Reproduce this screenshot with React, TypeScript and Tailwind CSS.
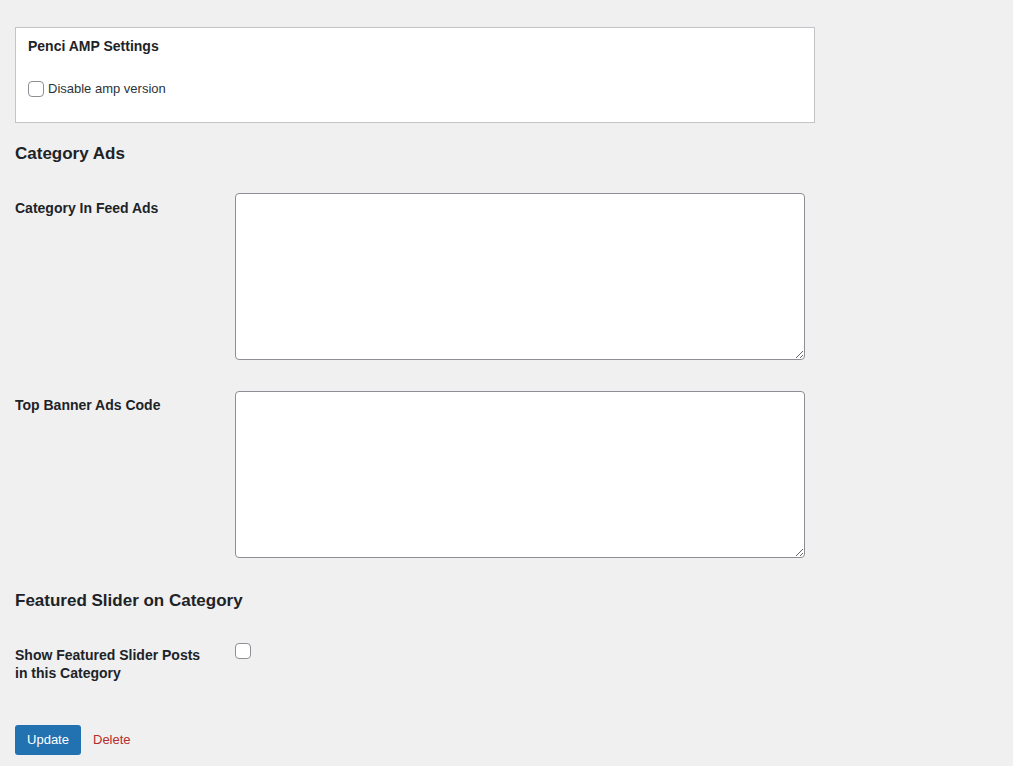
export default function App() {
  return (
    <div
      className="min-h-[766px] bg-[#f0f0f1] pl-[15px] pt-[27px] text-[13px] text-[#1d2327]"
      style={{ fontFamily: '"Liberation Sans", Arial, sans-serif' }}
    >
      {/* AMP settings box */}
      <div className="w-[800px] h-[96px] border border-[#c3c4c7] bg-white px-[12px] pt-[9px]">
        <h3 className="text-[14px] font-bold leading-[19px]">Penci AMP Settings</h3>
        <label className="mt-[25px] flex items-center gap-[4px] text-[#2c3338]">
          <span className="block h-[16px] w-[16px] rounded-[4px] border border-[#8c8f94] bg-white" />
          <span className="leading-[16px]">Disable amp version</span>
        </label>
      </div>

      <h2 className="mt-[20px] text-[17px] font-semibold leading-[22px]">Category Ads</h2>

      <div className="mt-[13px] flex flex-col">
        <div className="flex py-[15px]">
          <div className="w-[220px] shrink-0 pt-[6px] text-[14px] font-bold leading-[18px]">
            Category In Feed Ads
          </div>
          <textarea className="block h-[167px] w-[570px] rounded-[4px] border border-[#8c8f94] bg-white" />
        </div>
        <div className="flex py-[15px] pt-[16px]">
          <div className="w-[220px] shrink-0 pt-[5px] text-[14px] font-bold leading-[18px]">
            Top Banner Ads Code
          </div>
          <textarea className="block h-[167px] w-[570px] rounded-[4px] border border-[#8c8f94] bg-white" />
        </div>
      </div>

      <h2 className="mt-[17px] text-[17px] font-semibold leading-[22px]">Featured Slider on Category</h2>

      <div className="mt-[16px] flex">
        <div className="w-[220px] shrink-0 pt-[18px] text-[14px] font-bold leading-[18px]">
          Show Featured Slider Posts
          <br />
          in this Category
        </div>
        <div className="pt-[15px]">
          <span className="block h-[16px] w-[16px] rounded-[4px] border border-[#8c8f94] bg-white" />
        </div>
      </div>

      <div className="mt-[43px] flex items-center">
        <button className="h-[30px] w-[66px] rounded-[3px] bg-[#2271b1] text-[13px] text-white">
          Update
        </button>
        <a className="ml-[12px] text-[13px] text-[#b32d2e]">Delete</a>
      </div>
    </div>
  );
}
